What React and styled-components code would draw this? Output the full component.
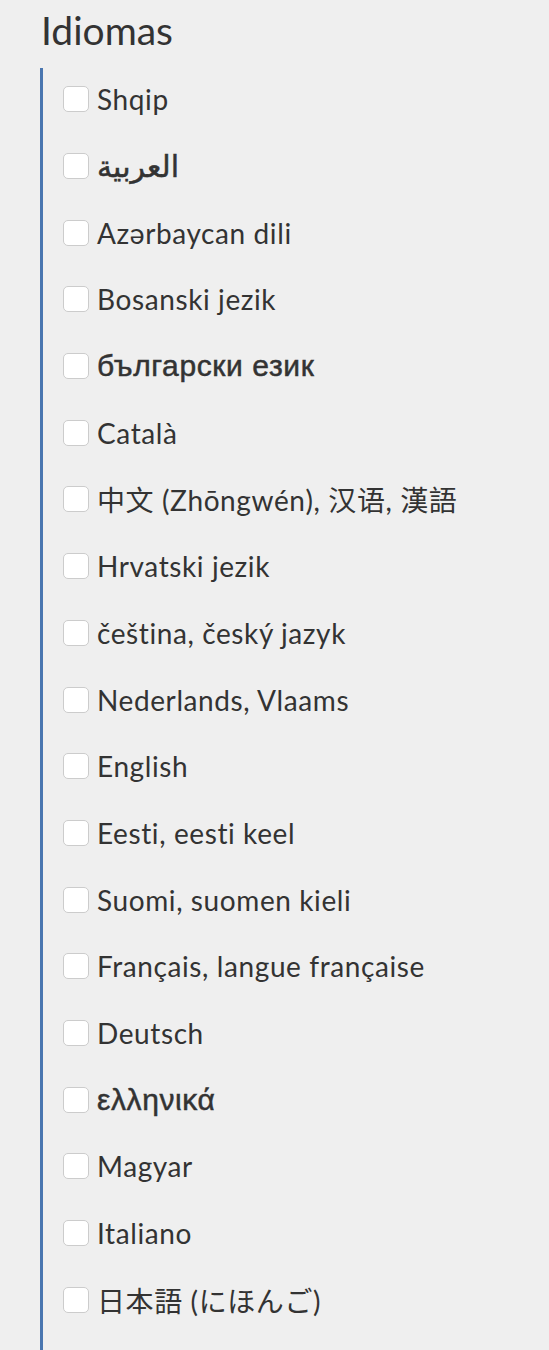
import React from "react";
import styled, { createGlobalStyle } from "styled-components";

const Global = createGlobalStyle`
  html, body { margin: 0; padding: 0; background: #efefef; }
  body { font-family: Lato, "Noto Sans", "Noto Sans CJK JP", sans-serif; color: #333; }
`;

const Page = styled.div`
  padding: 0 0 0 40px;
  min-height: 1350px;
  box-sizing: border-box;
`;

const Heading = styled.h2`
  margin: 0;
  padding: 6px 0 0 1px;
  height: 62px;
  box-sizing: border-box;
  font-size: 39px;
  font-weight: 400;
  line-height: 48px;
  color: #333;
`;

const List = styled.div`
  border-left: 3px solid #4a76b0;
  padding-left: 20px;
  margin-top: 6px;
  display: flex;
  flex-direction: column;
  min-height: 1290px;
`;

const Row = styled.label`
  display: flex;
  align-items: center;
  gap: 8px;
  height: 66.7px;
  margin-top: ${(p) => (p.$first ? "-2px" : "0")};
  cursor: pointer;
`;

const Box = styled.span`
  width: 26px;
  height: 26px;
  box-sizing: border-box;
  border: 1px solid #cccccc;
  border-radius: 5px;
  background: #fff;
  flex: none;
`;

const fonts = {
  latin: `Lato, "Noto Sans", sans-serif`,
  cjk: `Lato, "Noto Sans CJK SC", sans-serif`,
  jp: `Lato, "Noto Sans CJK JP", sans-serif`,
  alt: `"Liberation Sans", "DejaVu Sans", sans-serif`,
};

const Label = styled.span`
  font-family: ${(p) => fonts[p.$kind]};
  font-size: ${(p) => (p.$kind === "alt" ? "30px" : "28px")};
  font-weight: 400;
  letter-spacing: 0.6px;
  -webkit-text-stroke: ${(p) => (p.$kind === "alt" ? "0.5px #333" : "0")};
  white-space: nowrap;
  color: #333;
`;

const languages = [
  ["Shqip", "latin"],
  ["العربية", "alt"],
  ["Azərbaycan dili", "latin"],
  ["Bosanski jezik", "latin"],
  ["български език", "alt"],
  ["Català", "latin"],
  ["中文 (Zhōngwén), 汉语, 漢語", "cjk"],
  ["Hrvatski jezik", "latin"],
  ["čeština, český jazyk", "latin"],
  ["Nederlands, Vlaams", "latin"],
  ["English", "latin"],
  ["Eesti, eesti keel", "latin"],
  ["Suomi, suomen kieli", "latin"],
  ["Français, langue française", "latin"],
  ["Deutsch", "latin"],
  ["ελληνικά", "alt"],
  ["Magyar", "latin"],
  ["Italiano", "latin"],
  ["日本語 (にほんご)", "jp"],
];

export default function App() {
  return (
    <Page>
      <Global />
      <Heading>Idiomas</Heading>
      <List>
        {languages.map(([t, kind], i) => (
          <Row key={i} $first={i === 0}>
            <Box />
            <Label $kind={kind}>{t}</Label>
          </Row>
        ))}
      </List>
    </Page>
  );
}
